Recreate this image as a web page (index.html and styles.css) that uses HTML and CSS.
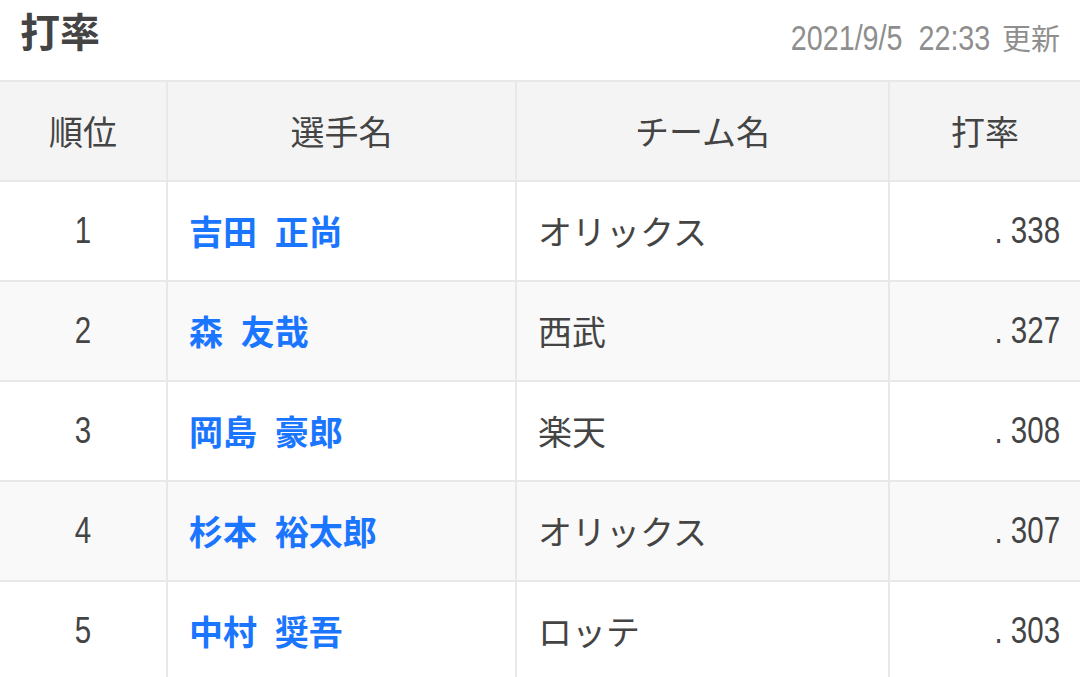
FILE: index.html
```html
<!DOCTYPE html>
<html lang="ja">
<head>
<meta charset="utf-8">
<title>打率</title>
<link rel="stylesheet" href="styles.css">
</head>
<body>
<div class="top">
  <h1 class="title">打率</h1>
  <div class="updated"><span class="stamp">2021/9/5&nbsp; 22:33</span><span class="upd-label">更新</span></div>
</div>
<div class="table">
  <div class="row head">
    <div class="cell center">順位</div>
    <div class="cell center">選手名</div>
    <div class="cell center">チーム名</div>
    <div class="cell center">打率</div>
  </div>
  <div class="row">
    <div class="cell center"><span class="digits mid">1</span></div>
    <div class="cell name">吉田 正尚</div>
    <div class="cell">オリックス</div>
    <div class="cell right"><span class="digits">. 338</span></div>
  </div>
  <div class="row alt">
    <div class="cell center"><span class="digits mid">2</span></div>
    <div class="cell name">森 友哉</div>
    <div class="cell">西武</div>
    <div class="cell right"><span class="digits">. 327</span></div>
  </div>
  <div class="row">
    <div class="cell center"><span class="digits mid">3</span></div>
    <div class="cell name">岡島 豪郎</div>
    <div class="cell">楽天</div>
    <div class="cell right"><span class="digits">. 308</span></div>
  </div>
  <div class="row alt">
    <div class="cell center"><span class="digits mid">4</span></div>
    <div class="cell name">杉本 裕太郎</div>
    <div class="cell">オリックス</div>
    <div class="cell right"><span class="digits">. 307</span></div>
  </div>
  <div class="row">
    <div class="cell center"><span class="digits mid">5</span></div>
    <div class="cell name">中村 奨吾</div>
    <div class="cell">ロッテ</div>
    <div class="cell right"><span class="digits">. 303</span></div>
  </div>
</div>
</body>
</html>
```

FILE: styles.css
```css
html, body {
  margin: 0;
  padding: 0;
  background: #ffffff;
  overflow: hidden;
}
body {
  font-family: "Noto Sans CJK JP", "Noto Sans", sans-serif;
  color: #444444;
  width: 1080px;
}
.top {
  display: flex;
  justify-content: space-between;
  align-items: flex-end;
  height: 80px;
  box-sizing: border-box;
  padding: 0 20px 25px 20px;
}
.title {
  margin: 0 0 5px 0;
  font-size: 40px;
  font-weight: 700;
  line-height: 1;
  color: #444444;
}
.updated {
  display: flex;
  align-items: baseline;
  color: #8e8e8e;
  line-height: 1;
}
.stamp {
  display: inline-block;
  font-family: "Liberation Sans", sans-serif;
  font-size: 35px;
  transform: scaleX(0.82);
  transform-origin: right center;
}
.upd-label {
  font-size: 29px;
  margin-left: 12px;
}
.table {
  border-top: 2px solid #e8e8e8;
}
.row {
  display: grid;
  grid-template-columns: 166px 347px 371px 190px;
  column-gap: 2px;
  background: #e8e8e8;
  border-bottom: 2px solid #e8e8e8;
  height: 98px;
}
.cell {
  background: #ffffff;
  display: flex;
  align-items: center;
  padding: 0 21px;
  font-size: 34px;
  line-height: 1;
  white-space: nowrap;
}
.row.alt .cell {
  background: #f9f9f9;
}
.row.head .cell {
  background: #f4f4f4;
}
.center {
  justify-content: center;
  padding: 0;
}
.right {
  justify-content: flex-end;
  padding: 0 20px 0 0;
}
.digits {
  display: inline-block;
  font-family: "Liberation Sans", sans-serif;
  font-size: 36px;
  color: #444444;
  transform: scaleX(0.82);
  transform-origin: right center;
}
.digits.mid {
  transform-origin: center center;
}
.name {
  color: #1a75ff;
  font-weight: 700;
  word-spacing: 10px;
}
```
